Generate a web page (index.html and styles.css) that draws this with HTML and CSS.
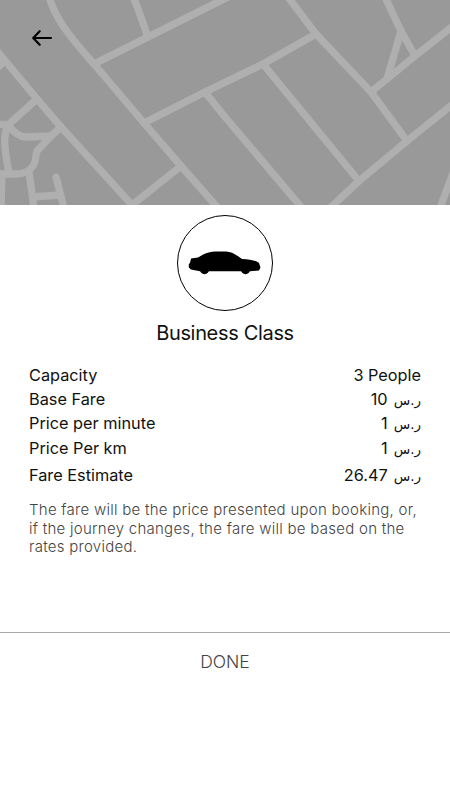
FILE: index.html
```html
<!DOCTYPE html>
<html lang="en">
<head>
  <meta charset="UTF-8">
  <title>Business Class</title>
  <link rel="stylesheet" href="styles.css">
</head>
<body>
  <header class="map">
    <svg class="roads" width="450" height="205" viewBox="0 0 450 205">
      <path d="M49 -3 C55 17 67 34 94 64 L144 123 L181 166 L218 208"/>
      <path d="M-3 51 L37 99 L61 127 L132 205 L181 166"/>
      <path d="M-3 68 L5 61"/>
      <path d="M94 64 L148 37 L228 -3"/>
      <path d="M133 -3 C138 7 143 24 148 37"/>
      <path d="M144 123 L205 92 L263 64 L316 34"/>
      <path d="M263 64 L359 181"/>
      <path d="M205 92 L225 117 L302 208"/>
      <path d="M288 -3 L316 34 L371 92 L407 141"/>
      <path d="M330 208 L359 181 L407 141 L453 104"/>
      <path d="M371 92 L415 56 L453 26"/>
      <path d="M385 -3 L401 31 L415 56"/>
      <path d="M401 31 L387 79"/>
      <path d="M453 173 L440 208"/>
      <path d="M37 99 L8 125 L-3 124"/>
      <path d="M8 125 Q17 137 26 137 L51 136 L61 127"/>
      <path d="M51 136 L37 151 C35 156 37 160 33 166 C28 173 22 174 16 174 L-3 174"/>
      <path d="M8 125 C3 137 4 145 9 174"/>
      <path d="M2 174 L1 208"/>
      <path d="M29 172 L34 208"/>
      <path d="M56 177 L64 208"/>
      <path d="M33 197 L60 195"/>
    </svg>
    <a class="back" href="#">
      <svg width="21" height="16" viewBox="0 0 21 16">
        <path d="M19 8 H1.5 M7.700 1.200 L1.200 8 L7.700 14.800"/>
      </svg>
    </a>
  </header>

  <main>
    <div class="badge">
      <svg width="74" height="24" viewBox="0 0 74 24">
        <path d="M3 7.5 L10 6.5 C18 1.5 22 .8 29 .6 H38 C44 .8 49 4.500 54 8 C62 8.300 68 9.500 71 12 L72.500 16.500 L71 19.500 L62 20.200 H12 L3 18.500 L.8 16.500 L.8 13 L2 12 Z"/>
        <circle cx="16.500" cy="18.500" r="4.700"/>
        <circle cx="57.500" cy="18.500" r="4.700"/>
      </svg>
    </div>
    <h1>Business Class</h1>

    <dl class="fares">
      <div class="row"><dt>Capacity</dt><dd>3 People</dd></div>
      <div class="row"><dt>Base Fare</dt><dd>10 <span class="cur">ر.س</span></dd></div>
      <div class="row"><dt>Price per minute</dt><dd>1 <span class="cur">ر.س</span></dd></div>
      <div class="row"><dt>Price Per km</dt><dd>1 <span class="cur">ر.س</span></dd></div>
      <div class="row total"><dt>Fare Estimate</dt><dd>26.47 <span class="cur">ر.س</span></dd></div>
    </dl>

    <p class="note">The fare will be the price presented upon booking, or, if the journey changes, the fare will be based on the rates provided.</p>
  </main>

  <button class="done">DONE</button>
</body>
</html>
```
FILE: styles.css
```css
body { margin: 0; background: #fff; color: #111; font-family: Inter, "DejaVu Sans", sans-serif; }

.map { position: relative; height: 205px; background: #999; overflow: hidden; }
.roads { display: block; }
.roads path { fill: none; stroke: #afafaf; stroke-width: 7.3; stroke-linecap: round; stroke-linejoin: round; }
.back { position: absolute; left: 32px; top: 30px; }
.back svg { display: block; }
.back path { fill: none; stroke: #000; stroke-width: 2.1; stroke-linecap: round; stroke-linejoin: round; }

main { height: 427px; box-sizing: border-box; padding: 9.5px 29px 0; }
.badge { display: flex; align-items: center; justify-content: center; width: 96px; height: 96px; box-sizing: border-box; margin: 0 auto; border: 1.3px solid #000; border-radius: 50%; }
h1 { margin: 10.5px 0 0; font-size: 20px; font-weight: 400; line-height: 24px; text-align: center; letter-spacing: -0.33px; }

.fares { margin: 18px 0 0; font-size: 16.3px; line-height: 24.2px; }
.row { display: flex; justify-content: space-between; }
.row dd { margin: 0; }
.total { margin-top: 3.5px; }
.cur { margin-left: 1.5px; font-family: "DejaVu Sans", sans-serif; font-size: 13.5px; line-height: 1; }

.note { margin: 13.5px 0 0; color: #444; font-size: 15px; font-weight: 300; line-height: 18.500px; letter-spacing: 0.27px; }

.done { display: block; width: 100%; height: 58px; padding: 0; border: 0; border-top: 1px solid #aaa; background: #fff; color: #444; font-family: inherit; font-size: 17.5px; font-weight: 300; }
```
